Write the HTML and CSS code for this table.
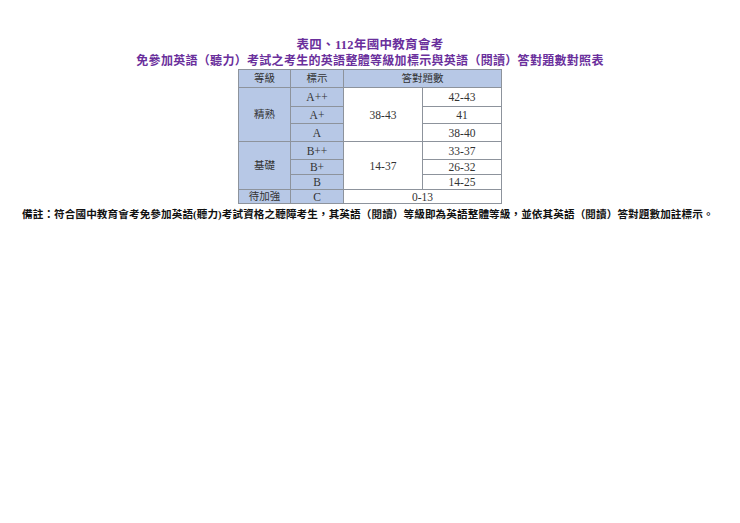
FILE: index.html
```html
<!DOCTYPE html>
<html lang="zh-Hant">
<head>
<meta charset="utf-8">
<title>表四、112年國中教育會考</title>
<link rel="stylesheet" href="styles.css">
</head>
<body>
<div class="page">
  <div class="title t1">表四、112年國中教育會考</div>
  <div class="title t2">免參加英語（聽力）考試之考生的英語整體等級加標示與英語（閱讀）答對題數對照表</div>
  <table class="grid">
    <colgroup>
      <col class="c1"><col class="c2"><col class="c3"><col class="c4">
    </colgroup>
    <tr class="r-head">
      <td class="blue">等級</td>
      <td class="blue">標示</td>
      <td class="blue" colspan="2">答對題數</td>
    </tr>
    <tr class="r19">
      <td class="blue" rowspan="3">精熟</td>
      <td class="blue num">A++</td>
      <td class="num" rowspan="3">38-43</td>
      <td class="num">42-43</td>
    </tr>
    <tr class="r17">
      <td class="blue num">A+</td>
      <td class="num">41</td>
    </tr>
    <tr class="r18">
      <td class="blue num">A</td>
      <td class="num">38-40</td>
    </tr>
    <tr class="r18">
      <td class="blue" rowspan="3">基礎</td>
      <td class="blue num">B++</td>
      <td class="num" rowspan="3">14-37</td>
      <td class="num">33-37</td>
    </tr>
    <tr class="r15">
      <td class="blue num">B+</td>
      <td class="num">26-32</td>
    </tr>
    <tr class="r15">
      <td class="blue num">B</td>
      <td class="num">14-25</td>
    </tr>
    <tr class="r14">
      <td class="blue">待加強</td>
      <td class="blue num">C</td>
      <td class="num" colspan="2">0-13</td>
    </tr>
  </table>
  <div class="note">備註：符合國中教育會考免參加英語(聽力)考試資格之聽障考生，其英語（閱讀）等級即為英語整體等級，並依其英語（閱讀）答對題數加註標示。</div>
</div>
</body>
</html>
```

FILE: styles.css
```css
html, body {
  margin: 0;
  padding: 0;
  background: #ffffff;
}

.page {
  width: 740px;
  padding-top: 36px;
  font-family: "Liberation Serif", "Noto Sans CJK TC", serif;
}

.title {
  text-align: center;
  color: #6a2f9c;
  font-weight: bold;
  font-size: 12px;
  letter-spacing: 0.3px;
  white-space: nowrap;
}

.t1 {
  line-height: 18px;
  font-size: 12.5px;
}

.t2 {
  line-height: 15px;
}

.grid {
  margin: 0 auto;
  border-collapse: collapse;
  width: 263px;
  table-layout: fixed;
  font-size: 10.5px;
  color: #333333;
}

.c1 { width: 52px; }
.c2 { width: 53px; }
.c3 { width: 79px; }
.c4 { width: 79px; }

.grid td {
  border: 1px solid #8d939c;
  padding: 0;
  text-align: center;
  vertical-align: middle;
  line-height: 12px;
  background: #ffffff;
}

.grid td.blue {
  background: #b7c8e6;
}

.grid td.num {
  font-size: 11.5px;
}

.r-head { height: 18px; }
.r19 { height: 19px; }
.r18 { height: 18px; }
.r17 { height: 17px; }
.r15 { height: 15px; }
.r14 { height: 14px; }

.note {
  margin-top: 4px;
  padding-left: 22px;
  line-height: 14px;
  font-size: 10.6px;
  letter-spacing: 0.1px;
  font-weight: bold;
  color: #111111;
  white-space: nowrap;
}
```
